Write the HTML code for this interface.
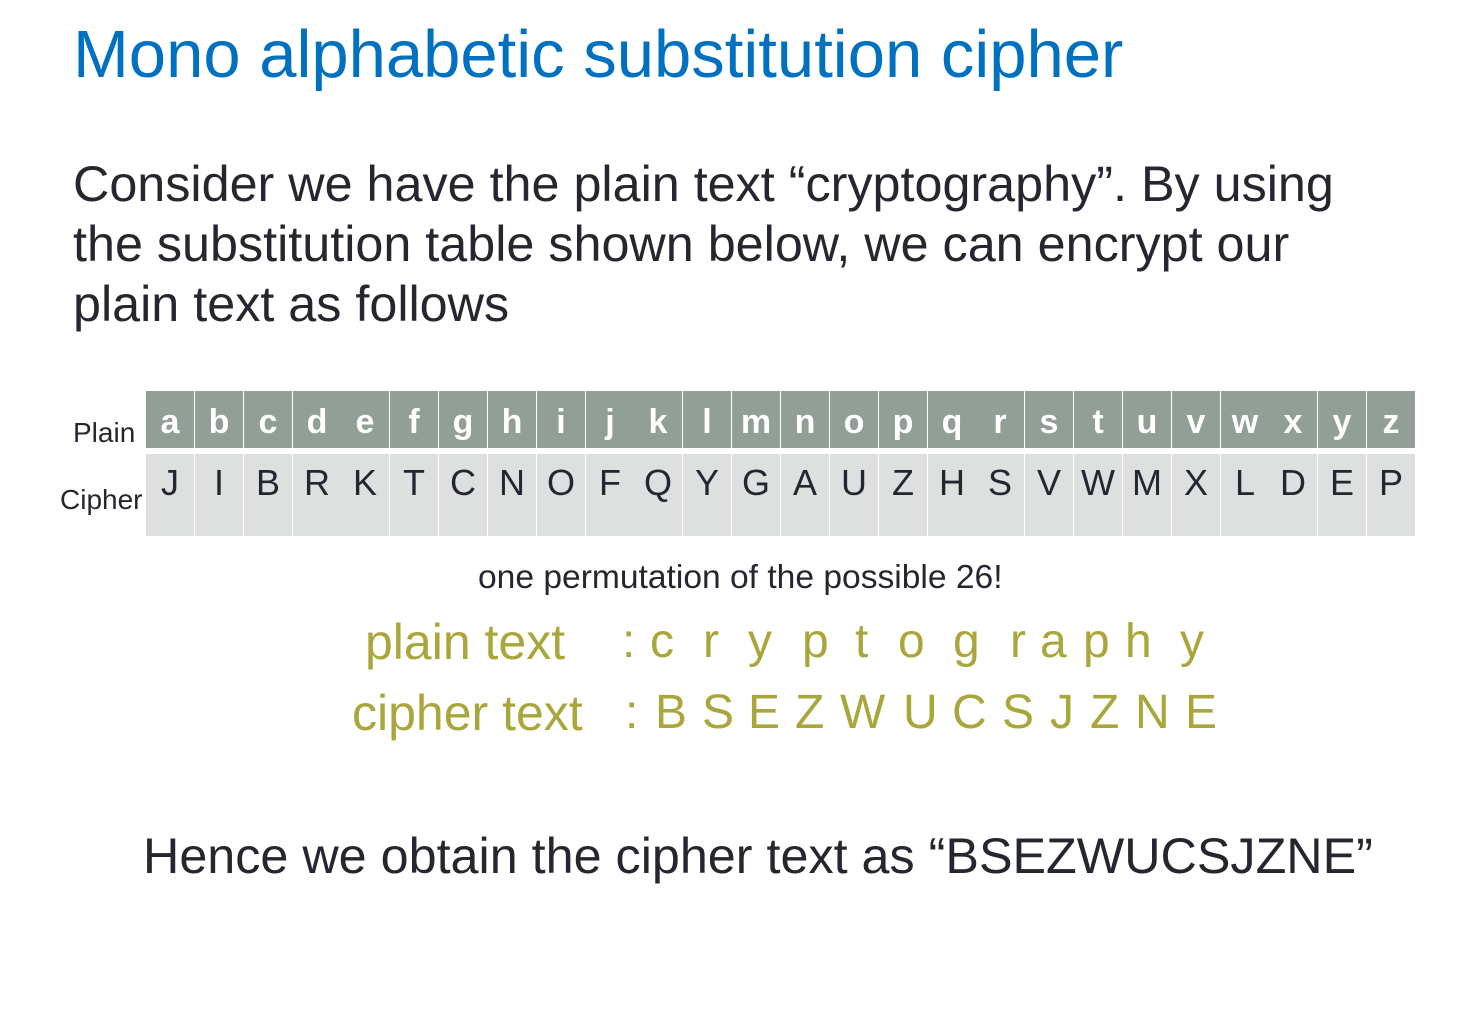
<!DOCTYPE html>
<html><head><meta charset="utf-8"><style>
body{margin:0;width:1469px;height:1010px;background:#fff;position:relative;overflow:hidden;font-family:"Liberation Sans",sans-serif;color:#262630}
.a{position:absolute;white-space:nowrap;line-height:1}
.t{position:absolute;left:146px;top:391px}
.c{position:absolute;width:48px;text-align:center}
.h{background:#919f97;color:#fff;font-weight:bold;font-size:34px;height:57px;line-height:62px}
.k{background:#dde0df;color:#262630;font-size:36px;height:82px;line-height:58px}
.g{color:#a9a73c;font-size:48px}
</style></head><body>
<div class="a" style="left:73px;top:21px;font-size:67px;color:#0070c0">Mono alphabetic substitution cipher</div>
<div class="a" style="left:73px;top:154px;font-size:50.3px;line-height:60px">Consider we have the plain text “cryptography”. By using<br>the substitution table shown below, we can encrypt our<br>plain text as follows</div>
<div class="a" style="left:73px;top:419px;font-size:28px">Plain</div>
<div class="a" style="left:60px;top:486px;font-size:28px">Cipher</div>
<div class="t" id="t"></div>
<div class="a" style="left:478px;top:561px;font-size:33.6px">one permutation of the possible 26!</div>
<div class="a g" style="left:365px;top:617px;font-size:50px">plain text</div>
<div class="a g" style="left:352px;top:688px;font-size:50px">cipher text</div>
<div id="p"></div>
<div class="a" style="left:143px;top:831px;font-size:50.3px">Hence we obtain the cipher text as “BSEZWUCSJZNE”</div>
<script>
var P="abcdefghijklmnopqrstuvwxyz",C="JIBRKTCNOFQYGAUZHSVWMXLDEP",h="",w=1270/26;
for(var i=0;i<26;i++){var x=Math.round(i*w);h+='<div class="c h" style="left:'+x+'px;top:0">'+P[i]+'</div><div class="c k" style="left:'+x+'px;top:63px">'+C[i]+'</div>';}
document.getElementById('t').innerHTML=h;
var pl=":cryptography",px=[622,650,703,748,802,855,898,953,1010,1040,1083,1125,1180];
var cl=":BSEZWUCSJZNE",cx=[625,655,702,748,795,840,903,952,1002,1050,1090,1135,1185],s="";
for(var i=0;i<13;i++){s+='<div class="a g" style="left:'+px[i]+'px;top:618px">'+pl[i]+'</div><div class="a g" style="left:'+cx[i]+'px;top:689px">'+cl[i]+'</div>';}
document.getElementById('p').innerHTML=s;
</script>
</body></html>
